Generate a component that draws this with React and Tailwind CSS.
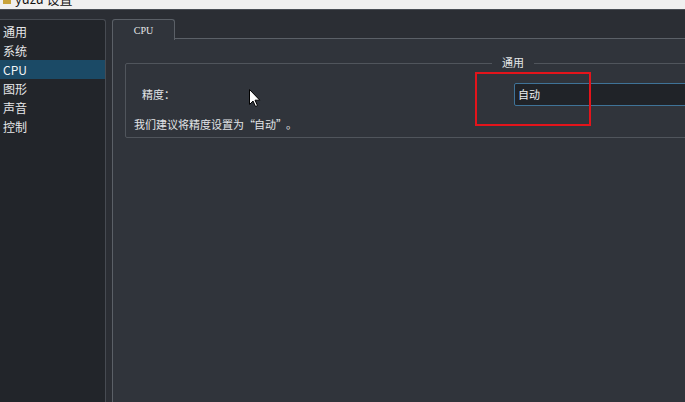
import React from "react";

const font = { fontFamily: '"Noto Sans CJK SC", "Noto Sans", sans-serif' };

export default function App() {
  const items = ["通用", "系统", "CPU", "图形", "声音", "控制"];
  return (
    <div
      lang="zh-CN"
      className="relative w-[685px] h-[402px] overflow-hidden bg-[#2b2e34] flex flex-col text-[#e2e4e7]"
      style={font}
    >
      {/* title bar (cut off) */}
      <div className="h-[10px] shrink-0 overflow-hidden bg-[#f0f0f0] border-b border-[#4a4e55]">
        <div className="-mt-[9px] flex items-center gap-[4px] pl-[3px] text-[13px] leading-[16px] text-[#111]">
          <span className="w-[8px] h-[10px] bg-[#c9a33a]" />
          <span>yuzu 设置</span>
        </div>
      </div>

      <div className="flex flex-1 pt-[9px] min-h-0">
        {/* left list */}
        <div className="w-[107px] shrink-0 -ml-[1px] bg-[#22252a] border border-[#474b52] border-b-0 rounded-tr-[3px] pt-[2px]">
          {items.map((it) => (
            <div
              key={it}
              className={
                "h-[19px] pl-[3px] text-[12px] leading-[19px] " +
                (it === "CPU" ? "bg-[#1b4a66] text-[#f2f4f6]" : "text-[#e6e7e9]")
              }
            >
              {it}
            </div>
          ))}
        </div>

        {/* tab widget */}
        <div className="ml-[6px] w-[800px] shrink-0 flex flex-col">
          <div className="flex h-[20px] shrink-0">
            <div
              className="w-[63px] h-[21px] bg-[#30343b] border border-b-0 border-[#5b6067] rounded-t-[3px] flex items-center justify-center text-[10px] text-[#e4e6e8] z-10"
              style={{ fontFamily: '"Liberation Serif", "DejaVu Serif", serif' }}
            >
              CPU
            </div>
            <div className="flex-1 border-b border-[#5b6067]" />
          </div>
          <div className="flex-1 bg-[#30343b] border-l border-[#5b6067] pl-[12px] pr-[12px] pt-[24px]">
            {/* group box */}
            <div className="relative border border-[#50555c] rounded-[2px] h-[75px] pt-[19px] pl-[8px]">
              <div className="absolute -top-[10px] left-[366px] bg-[#30343b] px-[10px] text-[11px] leading-[16px] text-[#e4e6e8]">
                通用
              </div>
              <div className="flex items-center h-[23px]">
                <div className="w-[380px] pl-[8px] text-[11px] text-[#e2e4e7]">精度：</div>
                <div className="flex-1 h-[23px] bg-[#202328] border border-[#3f7398] rounded-[2px] pl-[3px] flex items-center text-[11px] text-[#eceef0]">
                  自动
                </div>
              </div>
              <div className="mt-[10px] text-[11px] leading-[16px] text-[#e2e4e7]">
                我们建议将精度设置为
                <span className="inline-block w-[10px] text-center">“</span>
                自动
                <span className="inline-block w-[10px] text-center">”</span>
                <span className="inline-block w-[10px] text-center">。</span>
              </div>
            </div>
          </div>
        </div>
      </div>

      {/* red highlight box */}
      <div className="absolute left-[475px] top-[72px] w-[116px] h-[54px] border-2 border-[#e3141b]" />

      {/* mouse cursor */}
      <svg className="absolute left-[249px] top-[89px]" width="12" height="19" viewBox="0 0 12 19">
        <path d="M0.5 0.5 L0.5 15.5 L4 12 L6.5 17.5 L8.5 16.6 L6 11.2 L10.8 11.2 Z" fill="#fff" stroke="#000" strokeWidth="1" />
      </svg>
    </div>
  );
}
